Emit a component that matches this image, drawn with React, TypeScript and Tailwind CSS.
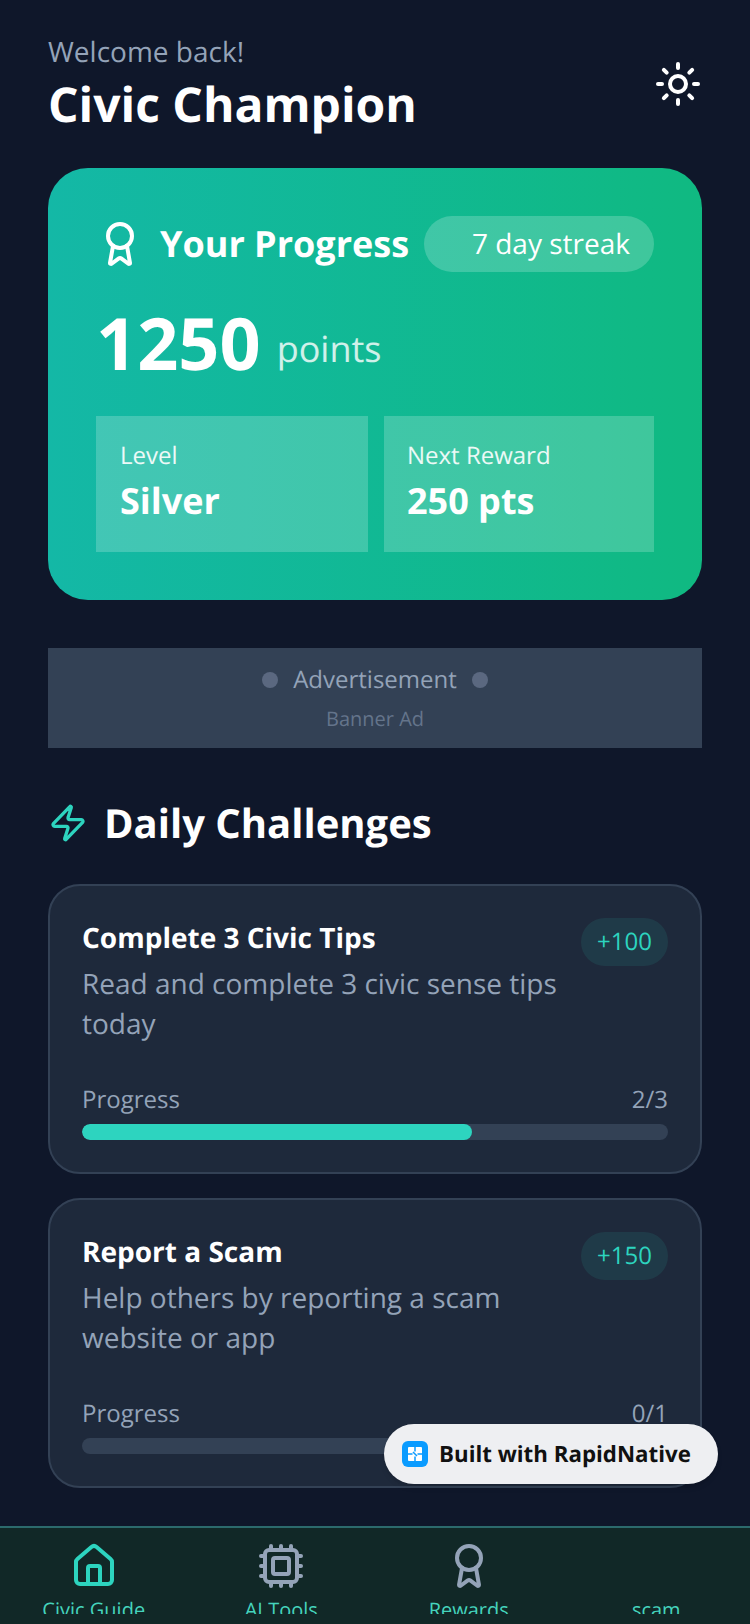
import { Award, Cpu, House, Sun, Zap } from "lucide-react";

const challenges = [
  { title: "Complete 3 Civic Tips", body: "Read and complete 3 civic sense tips today", points: "+100", done: "2/3", fill: "w-[390px]" },
  { title: "Report a Scam", body: "Help others by reporting a scam website or app", points: "+150", done: "0/1", fill: "w-0" },
];

const tabs = [
  { label: "Civic Guide", icon: House, active: true },
  { label: "AI Tools", icon: Cpu, active: false },
  { label: "Rewards", icon: Award, active: false },
  { label: "scam", icon: null, active: false },
];

function ChallengeCard({ title, body, points, done, fill }: (typeof challenges)[number]) {
  return <section className="h-[290px] rounded-[32px] border-2 border-[#334155] bg-[#1e293b] px-8 pt-8">
    <div className="flex items-start justify-between gap-4">
      <div className="w-[480px]">
        <h3 className="text-[28px] leading-[40px] font-bold text-white">{title}</h3>
        <p className="mt-1.5 text-[28px] leading-[40px] text-[#94a3b8]">{body}</p>
      </div>
      <span className="rounded-full bg-[#2dd4bf]/10 px-4 py-1.5 text-2xl leading-9 text-[#2dd4bf]">{points}</span>
    </div>
    <div className="mt-10 flex justify-between text-2xl leading-8 text-[#94a3b8]"><span>Progress</span><span>{done}</span></div>
    <div className="mt-2 h-4 overflow-hidden rounded-full bg-[#334155]"><div className={`h-full rounded-full bg-[#2dd4bf] ${fill}`} /></div>
  </section>;
}

export default function App() {
  return <div className="relative h-[1624px] w-[750px] overflow-hidden bg-[#0f172a] font-['Open_Sans',sans-serif] [text-rendering:geometricPrecision]">
    <header className="flex items-center justify-between px-12 pt-8">
      <div>
        <p className="text-[28px] leading-10 text-[#94a3b8]">Welcome back!</p>
        <h1 className="mt-px text-5xl leading-[64px] font-bold text-white">Civic Champion</h1>
      </div>
      <Sun size={48} strokeWidth={2} className="mb-0.5 text-white" />
    </header>

    <section className="mx-12 mt-[31px] h-[432px] rounded-[40px] bg-gradient-to-r from-[#14b8a6] to-[#10b981] p-12">
      <div className="flex items-center justify-between">
        <div className="flex items-center gap-4">
          <Award size={48} strokeWidth={2} className="text-white" />
          <h2 className="text-4xl leading-[56px] font-bold text-white">Your Progress</h2>
        </div>
        <span className="rounded-full bg-white/20 py-2.5 pr-6 pl-12 text-[28px] leading-9 text-white">7 day streak</span>
      </div>
      <div className="mt-[23px] flex items-end gap-4 text-white">
        <span className="text-[72px] leading-[96px] font-bold">1250</span>
        <span className="pb-[22px] text-4xl leading-10 text-white/80">points</span>
      </div>
      <div className="mt-[25px] flex gap-4">
        <div className="h-[136px] w-[272px] bg-white/20 px-6 pt-6">
          <p className="text-2xl leading-8 text-white/90">Level</p>
          <p className="mt-[5px] text-4xl leading-[48px] font-bold text-white">Silver</p>
        </div>
        <div className="h-[136px] flex-1 bg-white/20 pt-6 pr-6 pl-[23px]">
          <p className="text-2xl leading-8 text-white/90">Next Reward</p>
          <p className="mt-[5px] text-4xl leading-[48px] font-bold text-white">250 pts</p>
        </div>
      </div>
    </section>

    <div className="mx-12 mt-12 flex h-[100px] flex-col items-center justify-center bg-[#334155]">
      <div className="mt-px flex items-center gap-[15px]">
        <span className="size-4 rounded-full bg-[#5b6880]" />
        <span className="text-2xl leading-8 text-[#94a3b8]">Advertisement</span>
        <span className="size-4 rounded-full bg-[#5b6880]" />
      </div>
      <p className="mt-[9px] text-xl leading-7 text-[#64748b]">Banner Ad</p>
    </div>

    <div className="mx-12 mt-[47px] flex items-center gap-4">
      <Zap size={40} strokeWidth={2} className="text-[#2dd4bf]" />
      <h2 className="text-[40px] leading-[56px] font-bold text-white">Daily Challenges</h2>
    </div>

    <div className="mx-12 mt-[33px] flex flex-col gap-6">
      {challenges.map((challenge) => <ChallengeCard key={challenge.title} {...challenge} />)}
    </div>

    <div className="absolute top-[1424px] left-[384px] flex h-[60px] w-[334px] items-center gap-[11px] rounded-full bg-[#eeeff2] pl-[18px] shadow-md">
      <span className="flex size-[26px] items-center justify-center rounded-md bg-[#0a9bff]">
        <svg width="16" height="16" viewBox="0 0 16 16"><rect x="1" y="1" width="14" height="14" rx="1" fill="white" /><path d="M8 1v4.5M8 10.5V15M1 8h4.5M10.5 8H15M6 6l4 4" stroke="#0a9bff" strokeWidth="1.5" /></svg>
      </span>
      <span className="text-[22.3px] leading-8 font-bold text-[#111]">Built with RapidNative</span>
    </div>

    <nav className="absolute inset-x-0 bottom-0 flex h-[98px] border-t-2 border-[#2c6a6c] bg-[#112827]">
      {tabs.map(({ label, icon: Icon, active }) => <div key={label} className="flex h-[86px] flex-1 flex-col items-center overflow-hidden pt-3.5">
        <div className="h-12 shrink-0">{Icon ? <Icon size={48} strokeWidth={2} className={active ? "text-[#2dd4bf]" : "text-[#94a3b8]"} /> : null}</div>
        <span className="mt-1.5 shrink-0 text-xl leading-7 whitespace-nowrap text-[#45d4bd]">{label}</span>
      </div>)}
    </nav>
  </div>;
}
